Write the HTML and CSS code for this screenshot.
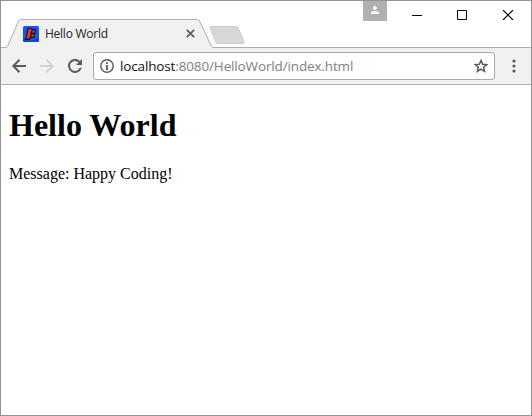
FILE: index.html
```html
<!DOCTYPE html>
<html lang="en">
<head>
<meta charset="utf-8">
<title>Hello World</title>
<link rel="stylesheet" href="styles.css">
</head>
<body>
<div class="window">
  <header class="strip">
    <div class="tab">
      <svg class="tab-shape" width="213" height="29" viewBox="0 0 213 29"><path d="M0 28.500H5Q6 28.500 6.500 27.500L17.500 2Q18.200 .5 19.500 .5H196.500Q198 .5 198.500 2L210.500 27.500Q211 28.500 212 28.500H213V29H0Z" fill="#f1f1f1"/><path d="M0 28.500H5Q6 28.500 6.500 27.500L17.500 2Q18.200 .5 19.500 .5H196.500Q198 .5 198.500 2L210.500 27.500Q211 28.500 212 28.500H213" fill="none" stroke="#adadad"/></svg>
      <svg class="favicon" width="16" height="16" viewBox="0 0 16 16"><rect width="16" height="16" rx="1.500" fill="#1857ee"/><path d="M0 12l3-1 2 4 6-1 5-2v3l-1 1H1l-1-1z" fill="#1442cf"/><path d="M4.500 2H9l.5 1H13v4l-1 1v4H8l-1 2H2l1-4z" fill="#10142f"/><path d="M5.700 3h2.800L6.300 12.500H3.500z" fill="#f03b24"/><path d="M9.300 4.500h2.900l-.5 2.200H9zM8.500 8.500h2.800l-.5 2.200H8z" fill="#d93628"/></svg>
      <span class="tab-title">Hello World</span>
      <svg class="tab-close" width="9" height="9" viewBox="0 0 9 9"><path d="M.8.8l7.400 7.400M8.200.8L.8 8.200" stroke="#5a5a5a" stroke-width="1.700"/></svg>
    </div>
    <svg class="new-tab" width="36" height="18" viewBox="0 0 36 18"><path d="M2 .5H27Q28.500 .5 29 1.500L35 15.500Q35.500 17.500 34 17.500H9Q7.500 17.500 7 16.500L1 2Q.5 .5 2 .5Z" fill="#d8d8d8" stroke="#cbcbcb"/></svg>
    <div class="controls">
      <span class="profile"><svg width="8" height="8" viewBox="0 0 8 8"><circle cx="4" cy="2" r="1.900" fill="#fff"/><path d="M0 8V7Q0 5 4 5T8 7V8Z" fill="#fff"/></svg></span>
      <svg class="win-icons" width="102" height="10" viewBox="0 0 102 10" fill="none" stroke="#000"><path d="M0 5.500H10M45.500 .5h9v9h-9z"/><path d="M91 0l10 10M101 0l-10 10" stroke-width="1.200"/></svg>
    </div>
  </header>
  <nav class="toolbar">
    <svg class="back" width="14" height="14" viewBox="0 0 14 14" fill="none" stroke="#5a5a5a" stroke-width="2"><path d="M14 7H1.500M7.500 .8L1.300 7l6.200 6.200"/></svg>
    <svg class="forward" width="14" height="14" viewBox="0 0 14 14" fill="none" stroke="#d2d2d2" stroke-width="2"><path d="M0 7h12.500M6.500 .8L12.700 7l-6.200 6.200"/></svg>
    <svg class="reload" width="14" height="14" viewBox="0 0 14 14"><path d="M11.500 2.900A6 6 0 1 0 12.700 9" fill="none" stroke="#5a5a5a" stroke-width="2"/><path d="M14 0v6H8z" fill="#5a5a5a"/></svg>
    <div class="omnibox">
      <svg class="info" width="14" height="14" viewBox="0 0 14 14"><circle cx="7" cy="7" r="6.200" fill="none" stroke="#5a5a5a" stroke-width="1.400"/><path d="M6.100 3.200h1.800v1.700H6.100zM6.100 6h1.800v5H6.100z" fill="#5a5a5a"/></svg>
      <span class="url">localhost<span class="path">:8080/HelloWorld/index.html</span></span>
      <svg class="star" width="14" height="14" viewBox="0 0 14 14"><path d="M7 1.400l1.650 3.800 4.100.4-3.100 2.700.95 4.100L7 10.200l-3.600 2.200.95-4.100-3.100-2.700 4.100-.4z" fill="none" stroke="#5a5a5a" stroke-width="1.500"/></svg>
    </div>
    <svg class="menu" width="4" height="14" viewBox="0 0 4 14" fill="#5a5a5a"><circle cx="2" cy="2" r="1.600"/><circle cx="2" cy="7" r="1.600"/><circle cx="2" cy="12" r="1.600"/></svg>
  </nav>
  <main class="page">
    <h1>Hello World</h1>
    <p>Message: Happy Coding!</p>
  </main>
</div>
</body>
</html>
```
FILE: styles.css
```css
* { box-sizing: border-box; }
body { margin: 0; }
svg { display: block; flex: none; }
.window {
  width: 532px;
  height: 416px;
  border: 1px solid #939393;
  background: #fff;
  display: flex;
  flex-direction: column;
  overflow: hidden;
  font-family: "Open Sans", "Noto Sans", sans-serif;
}
.strip {
  height: 47px;
  flex: none;
  display: flex;
  align-items: flex-end;
  box-shadow: inset 0 -1px #adadad;
}
.tab {
  position: relative;
  width: 213px;
  height: 29px;
  display: flex;
  align-items: center;
  padding: 0 19px 0 22px;
}
.tab-shape { position: absolute; left: 0; top: 0; }
.favicon { position: relative; }
.tab-title {
  position: relative;
  flex: 1;
  margin-left: 6px;
  font-size: 12px;
  line-height: 16px;
  letter-spacing: -0.25px;
  color: #222;
}
.tab-close { position: relative; }
.new-tab { margin: 0 0 4px -5px; }
.controls {
  margin-left: auto;
  align-self: flex-start;
  display: flex;
}
.profile {
  width: 24px;
  height: 20px;
  background: #b1b1b1;
  display: flex;
  justify-content: center;
  padding-top: 5px;
}
.win-icons { margin: 9px 17px 0 25px; }
.toolbar {
  height: 37px;
  flex: none;
  display: flex;
  align-items: center;
  padding-left: 11px;
  background: #f1f1f1;
  border-bottom: 1px solid #adadad;
}
.forward, .reload { margin-left: 14px; }
.omnibox {
  width: 402px;
  height: 28px;
  margin-left: 11px;
  padding: 0 6px;
  display: flex;
  align-items: center;
  background: #fff;
  border: 1px solid #a9a9a9;
  border-radius: 3px;
}
.url {
  flex: 1;
  margin-left: 6px;
  font-size: 13.5px;
  line-height: 20px;
  letter-spacing: -0.14px;
  white-space: nowrap;
  color: #111;
}
.path { color: #808080; }
.menu { margin-left: 16.5px; }
.page {
  padding: 0 8px;
  font-family: "Liberation Serif", serif;
  color: #000;
}
h1 { margin: 21px 0; font-size: 32px; line-height: 38px; }
p { margin: 0; font-size: 16px; line-height: 18px; }
```
